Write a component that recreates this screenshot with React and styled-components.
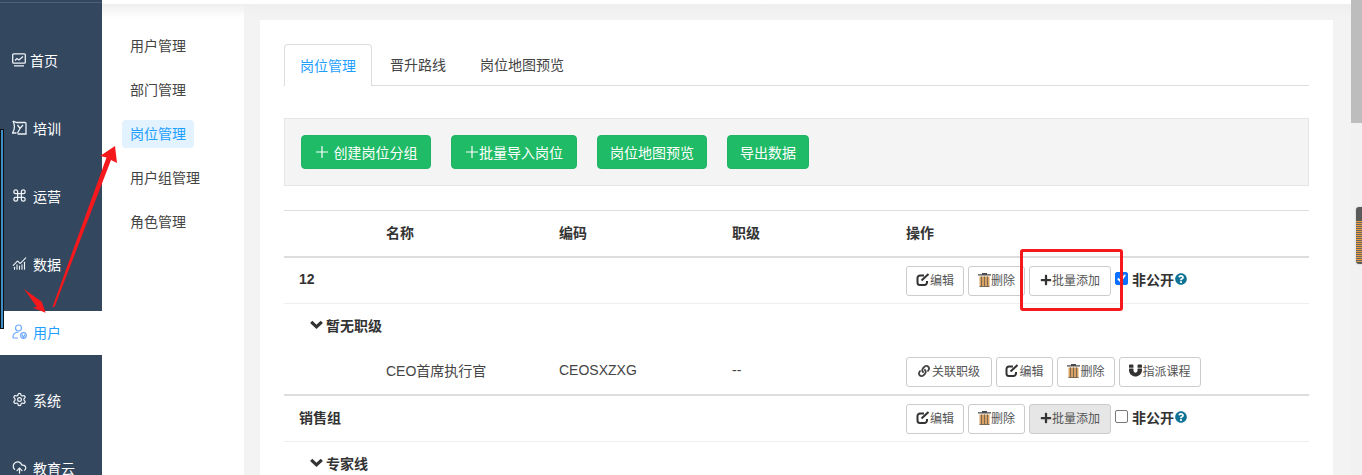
import React from "react";
import styled, { createGlobalStyle } from "styled-components";
import { Command, Settings, ChartNoAxesCombined, CloudUpload } from "lucide-react";
import { FaPlus, FaQuestionCircle, FaLink, FaMagnet } from "react-icons/fa";

const Global = createGlobalStyle`
  html, body { margin: 0; padding: 0; height: 475px; overflow: hidden; background: #f3f3f3; }
  * { box-sizing: border-box; }
  body { font-family: "Liberation Sans", "Noto Sans CJK SC", sans-serif; color: #333; }
`;

const Page = styled.div`
  position: relative; display: flex; width: 1362px; height: 475px; overflow: hidden;
`;
const Sidebar = styled.nav`
  flex: 0 0 102px; height: 475px; background: #33475e; padding-top: 39px;
  display: flex; flex-direction: column; gap: 24px;
`;
const NavItem = styled.div`
  flex: 0 0 44px; display: flex; align-items: center; gap: ${p => p.$gap ?? 6}px; padding: 0 0 3px 12px;
  font-size: 14px; color: ${p => p.$active ? "#1e9fff" : "#fff"};
  background: ${p => p.$active ? "#fff" : "transparent"};
  svg { flex: none; color: ${p => p.$active ? "#6ea8ff" : "#eef2f7"}; }
`;
const SubNav = styled.nav`
  flex: 0 0 142px; background: #fff; padding: 32px 0 0 20px; display: flex; flex-direction: column; gap: 16px;
  align-items: flex-start;
`;
const SubItem = styled.div`
  height: 28px; line-height: 28px; padding: 0 8px; font-size: 14px; border-radius: 4px;
  color: ${p => p.$active ? "#1e9fff" : "#444"};
  background: ${p => p.$active ? "#e3f2ff" : "transparent"};
`;
const Main = styled.main`
  flex: 1; padding: 20px 29px 0 16px; min-width: 0; background: #f3f3f3;
`;
const Card = styled.section`
  background: #fff; height: 600px; padding: 24px;
`;
const Tabs = styled.div`
  display: flex; height: 42px; border-bottom: 1px solid #ddd;
`;
const Tab = styled.div`
  height: 42px; line-height: 42px; padding: 0 ${p => p.$pad ?? 16}px; font-size: 14px;
  color: ${p => p.$active ? "#1e9fff" : "#444"};
  ${p => p.$active ? "border: 1px solid #ddd; border-bottom: 0; border-radius: 4px 4px 0 0; background: #fff;" : ""}
`;
const Toolbar = styled.div`
  margin-top: 32px; height: 68px; background: #f4f4f4; border: 1px solid #e6e6e6;
  display: flex; align-items: center; gap: 20px; padding-left: 16px;
`;
const GreenButton = styled.button`
  height: 34px; width: ${p => p.$w}px; border: 1px solid #1fb565; border-radius: 4px; background: #1fbb66;
  color: #fff; font: 14px "Liberation Sans", "Noto Sans CJK SC", sans-serif; padding: 0;
  display: flex; align-items: center; justify-content: center; gap: ${p => p.$gap ?? 0}px;
`;
const Table = styled.div`
  margin-top: 24px; border-top: 1px solid #ddd;
`;
const Row = styled.div`
  display: grid; grid-template-columns: 102px 173px 173px 174px 1fr; align-items: center;
  height: ${p => p.$h}px; font-size: 14px; color: #444; padding-bottom: 4px;
  border-bottom: ${p => p.$line ?? 0}px solid ${p => p.$line === 2 ? "#ddd" : "#eee"};
`;
const TextCell = styled.span`
  white-space: nowrap;
`;
const HeadCell = styled(TextCell)`
  font-weight: bold; color: #333;
`;
const GroupName = styled(TextCell)`
  padding-left: 15px; font-weight: bold; color: #333;
`;
const SubHead = styled(TextCell)`
  display: flex; align-items: center; gap: 3px; padding-left: 26px; font-weight: bold; color: #333;
`;
const Actions = styled.div`
  display: flex; align-items: center; gap: 4px; grid-column: 5; white-space: nowrap;
  position: relative; top: 2px;
`;
const ActionBtn = styled.button`
  height: 30px; width: ${p => p.$w}px; padding: 0 0 2px; border: 1px solid #ccc; border-radius: 3px;
  background: ${p => p.$on ? "#e6e6e6" : "#fff"}; color: #555;
  font: 12px "Liberation Sans", "Noto Sans CJK SC", sans-serif;
  display: flex; align-items: center; justify-content: center; gap: ${p => p.$gap ?? 0}px;
  svg { flex: none; }
`;
const Check = styled.span`
  width: 13px; height: 13px; border-radius: 2px; display: inline-flex; align-items: center; justify-content: center;
  position: relative; top: -2px;
  background: ${p => p.$on ? "#0b6fff" : "#fff"}; border: 1px solid ${p => p.$on ? "#0b6fff" : "#777"};
  svg { display: block; }
`;
const Private = styled.span`
  font-weight: bold; color: #333; font-size: 14px; display: inline-flex; align-items: center; gap: 1px;
  position: relative; top: -2px;
  svg { color: #0f7396; font-size: 12px; }
`;
const ScrollTrack = styled.div`
  position: absolute; top: 0; right: 0; width: 11px; height: 475px; background: #f1f1f1;
`;
const ScrollThumb = styled.div`
  height: 123px; background: #bdbdbd;
`;
const Handle = styled.div`
  position: absolute; top: 207px; right: 0; width: 6px; height: 57px; border-radius: 3px 0 0 3px;
  background: repeating-linear-gradient(#e59b3c 0 1px, #666 1px 2px);
  border-top: 14px solid #5a5a5a; border-bottom: 2px solid #5a5a5a; box-shadow: 0 0 2px #bbb;
`;
const Strip = styled.div`
  position: absolute; left: 0; top: 129px; width: 4px; height: 200px; background: #3d8fc7; border: 1px solid #111;
`;
const TopShade = styled.div`
  position: absolute; left: 102px; top: 0; width: 1249px; height: 18px;
  background: linear-gradient(#fff 0 4px, #efefef 4px, rgba(243,243,243,0) 100%);
`;
const TopLine = styled.div`
  position: absolute; left: 0; top: 2px; width: 102px; height: 1px; background: #4d6078;
`;
const RedBox = styled.div`
  position: absolute; left: 1020px; top: 249px; width: 103px; height: 62px;
  border: 3px solid #f5181c; border-radius: 3px;
`;
const Arrows = styled.svg`
  position: absolute; left: 0; top: 0; pointer-events: none;
`;

const EditIcon = () => (
  <svg width="14" height="13" viewBox="0 0 14 13" fill="none" stroke="#333" strokeWidth="2">
    <path d="M11 8v1.500A2.500 2.500 0 0 1 8.500 12H4A2.500 2.500 0 0 1 1.500 9.500V5A2.500 2.500 0 0 1 4 2.500h4" />
    <path d="M5.500 7.500L12.500 1" />
  </svg>
);
const Trash = () => (
  <svg width="13" height="14" viewBox="0 0 13 14">
    <path fill="#4a4a4a" d="M4 0h5v1.200h4V2.400H0V1.200h4z" />
    <path fill="#d9a262" d="M1.500 3.500h10v10h-10z" />
    <path fill="none" stroke="#7a6a55" strokeWidth="1" d="M3.500 3.500v10M6.500 3.500v10M9.500 3.500v10M1.500 13.500h10" />
  </svg>
);
const Chevron = () => (
  <svg width="13" height="9" viewBox="0 0 13 9" fill="none" stroke="#333" strokeWidth="3.200">
    <path d="M1.200 1.800l5.300 5 5.300-5" />
  </svg>
);
const Plus = () => <FaPlus size={12} color="#333" />;

const GroupActions = ({ checked, on }) => (
  <Actions>
    <ActionBtn $w={58}><EditIcon />编辑</ActionBtn>
    <ActionBtn $w={57}><Trash />删除</ActionBtn>
    <ActionBtn $w={82} $on={on}><Plus />批量添加</ActionBtn>
    <Check $on={checked}>
      {checked && <svg width="11" height="11" viewBox="0 0 12 12" fill="none" stroke="#fff" strokeWidth="2"><path d="M2 6l3 3 5-7" /></svg>}
    </Check>
    <Private>非公开<FaQuestionCircle /></Private>
  </Actions>
);

const ScreenIcon = () => (
  <svg width="14" height="14" viewBox="0 0 14 14" fill="none" stroke="#eef2f7" strokeWidth="1.300">
    <rect x="0.700" y="0.800" width="12.600" height="9.400" rx="1" />
    <path d="M3 7.500l2-2 2 1.500L11 3.500M2 12.800h10" />
  </svg>
);
const BookIcon = () => (
  <svg width="15" height="15" viewBox="0 0 15 15" fill="none" stroke="#eef2f7" strokeWidth="1.300">
    <path d="M1 1l3.500 1.500h8.500c1 0 1 .5 1 1V14H5.500M1 1c2 4 2 8-.500 12h4M5.500 5l2.500 3.500L11 5M8 8.500L5.500 13" />
  </svg>
);
const UserIcon = () => (
  <svg width="15" height="15" viewBox="0 0 15 15" fill="none" stroke="#6ea8ff" strokeWidth="1.200">
    <circle cx="6.500" cy="4" r="3" />
    <path d="M1 14c-.5-3.500 2-6 5.500-6M6 14H1" />
    <circle cx="11.500" cy="11.500" r="2.800" />
    <path d="M10 10.500l1.500 3 1.500-3" />
  </svg>
);
const ThinPlus = () => (
  <svg width="14" height="14" viewBox="0 0 14 14" stroke="#fff" strokeWidth="1.200" fill="none">
    <path d="M7 1v12M1 7h12" />
  </svg>
);

export default function App() {
  return (
    <Page>
      <Global />
      <Sidebar>
        <NavItem $gap={4}><ScreenIcon />首页</NavItem>
        <NavItem><BookIcon />培训</NavItem>
        <NavItem><Command size={15} strokeWidth={2} />运营</NavItem>
        <NavItem><ChartNoAxesCombined size={15} strokeWidth={1.800} />数据</NavItem>
        <NavItem $active><UserIcon />用户</NavItem>
        <NavItem><Settings size={15} strokeWidth={2} />系统</NavItem>
        <NavItem><CloudUpload size={15} strokeWidth={2} />教育云</NavItem>
      </Sidebar>
      <SubNav>
        <SubItem>用户管理</SubItem>
        <SubItem>部门管理</SubItem>
        <SubItem $active>岗位管理</SubItem>
        <SubItem>用户组管理</SubItem>
        <SubItem>角色管理</SubItem>
      </SubNav>
      <Main>
        <Card>
          <Tabs>
            <Tab $active $pad={15}>岗位管理</Tab>
            <Tab $pad={18}>晋升路线</Tab>
            <Tab>岗位地图预览</Tab>
          </Tabs>
          <Toolbar>
            <GreenButton $w={130} $gap={5}><ThinPlus />创建岗位分组</GreenButton>
            <GreenButton $w={126}><ThinPlus />批量导入岗位</GreenButton>
            <GreenButton $w={110}>岗位地图预览</GreenButton>
            <GreenButton $w={82}>导出数据</GreenButton>
          </Toolbar>
          <Table>
            <Row $h={47} $line={2}>
              <span />
              <HeadCell>名称</HeadCell>
              <HeadCell>编码</HeadCell>
              <HeadCell>职级</HeadCell>
              <HeadCell>操作</HeadCell>
            </Row>
            <Row $h={46} $line={1}>
              <GroupName>12</GroupName>
              <GroupActions checked />
            </Row>
            <Row $h={45}>
              <SubHead><Chevron />暂无职级</SubHead>
            </Row>
            <Row $h={47} $line={2}>
              <span />
              <TextCell>CEO首席执行官</TextCell>
              <TextCell>CEOSXZXG</TextCell>
              <TextCell>--</TextCell>
              <Actions>
                <ActionBtn $w={86} $gap={2}><FaLink size={12} color="#444" />关联职级</ActionBtn>
                <ActionBtn $w={57}><EditIcon />编辑</ActionBtn>
                <ActionBtn $w={58}><Trash />删除</ActionBtn>
                <ActionBtn $w={82}><FaMagnet size={13} color="#333" />指派课程</ActionBtn>
              </Actions>
            </Row>
            <Row $h={46} $line={1}>
              <GroupName>销售组</GroupName>
              <GroupActions on />
            </Row>
            <Row $h={45}>
              <SubHead><Chevron />专家线</SubHead>
            </Row>
          </Table>
        </Card>
      </Main>
      <TopShade />
      <TopLine />
      <Strip />
      <ScrollTrack><ScrollThumb /></ScrollTrack>
      <Handle />
      <RedBox />
      <Arrows width="1362" height="475" viewBox="0 0 1362 475">
        <path fill="#f5181c" d="M115 146 L100 156 L106.500 157.500 L52.500 307 L54.500 307 L111 160 L117 163 Z" />
        <path fill="#f5181c" d="M24 289 L41.700 301.700 L45.700 312.700 L32.700 307.700 L36.700 306.700 Z" />
      </Arrows>
    </Page>
  );
}
